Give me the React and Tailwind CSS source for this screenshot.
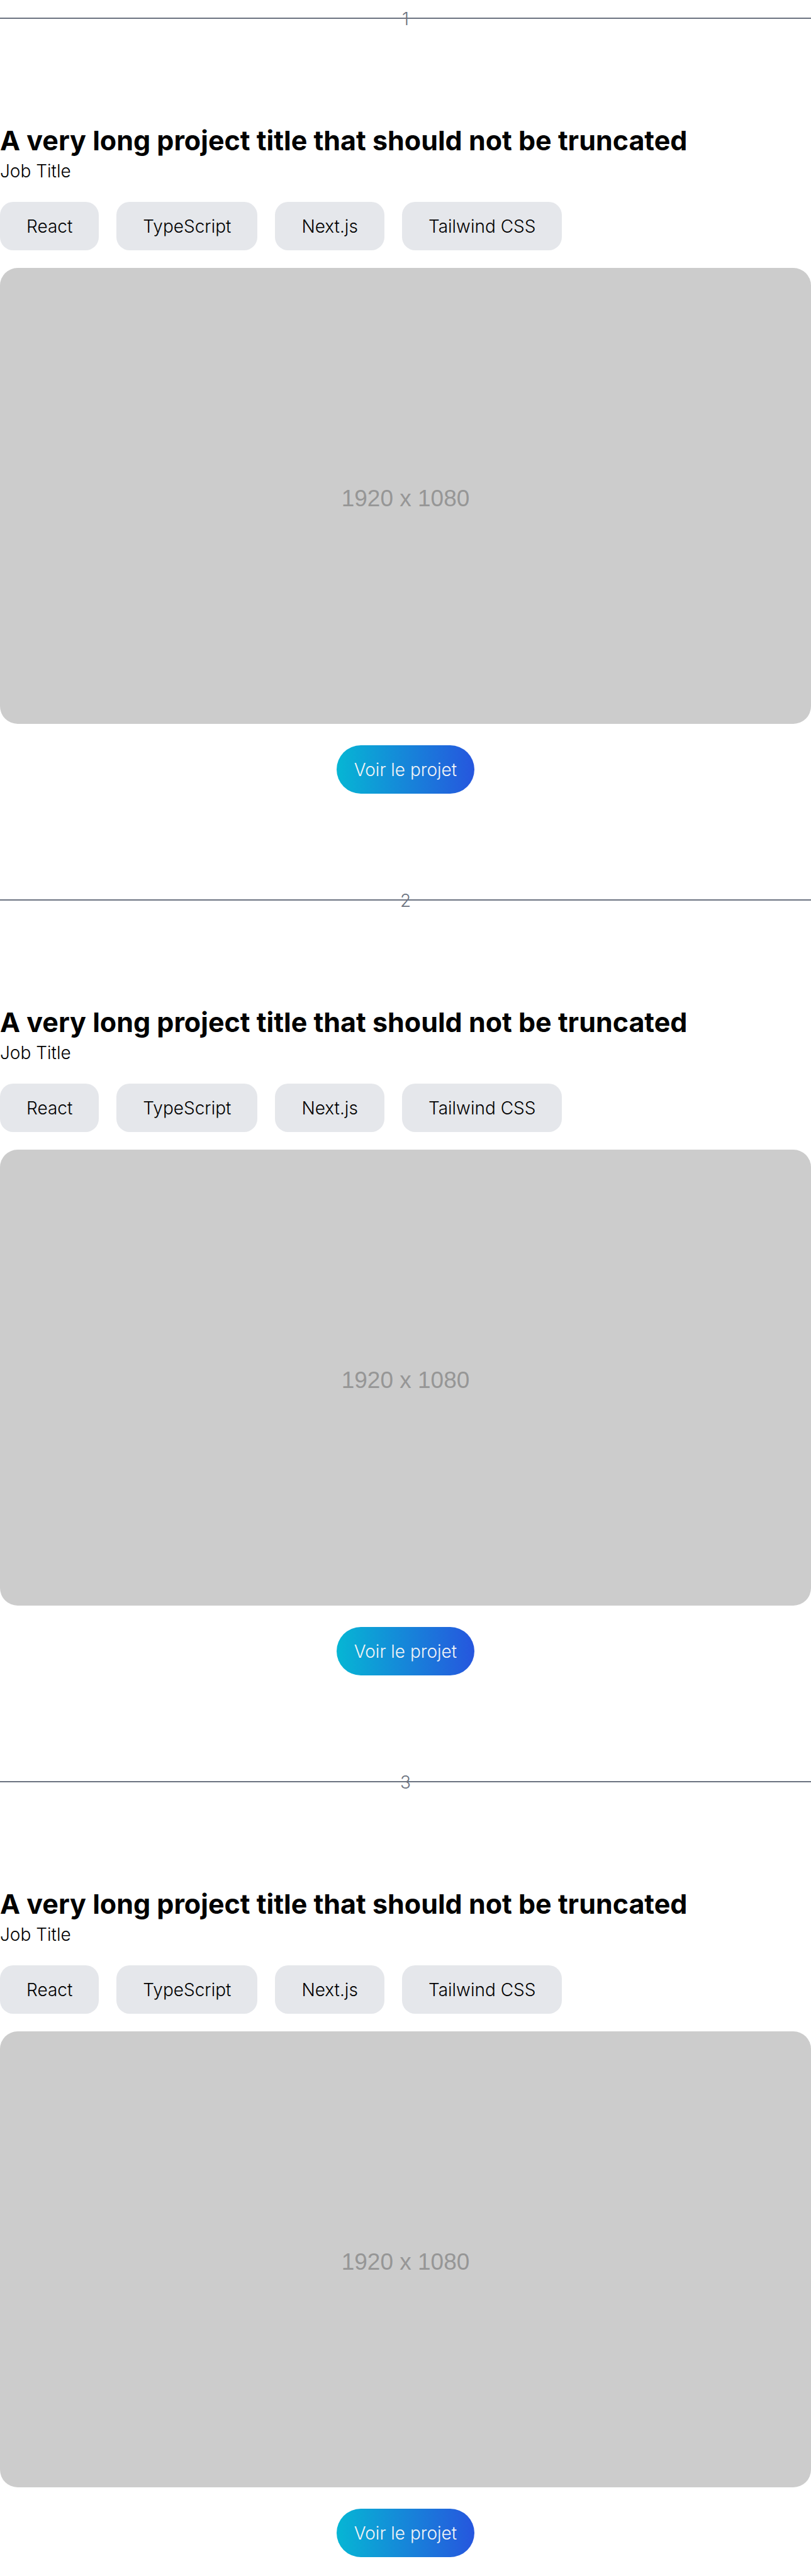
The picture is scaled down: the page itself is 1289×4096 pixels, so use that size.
const projects = [1, 2, 3];
const tags = ["React", "TypeScript", "Next.js", "Tailwind CSS"];

function Separator({ number }) {
  return (
    <div className="grid h-[60px] w-full text-[#6b7280]">
      <hr className="col-start-1 row-start-1 mt-7 h-0.5 w-full self-start border-0 bg-[#6b7280]" />
      <span className="col-start-1 row-start-1 self-center text-center text-[28px] leading-[42px] font-light">
        {number}
      </span>
    </div>
  );
}

function Project({ number }) {
  return (
    <section className="pb-35 last:pb-7">
      <Separator number={number} />
      <article className="pt-[135px]">
        <h2 className="text-[43px] leading-[56px] font-bold">
          A very long project title that should not be truncated
        </h2>
        <p className="text-[28px] leading-[42px] font-light">Job Title</p>
        <ul className="mt-7 flex flex-wrap gap-7">
          {tags.map((tag) => (
            <li
              key={tag}
              className="flex h-[77px] items-center rounded-[21px] bg-[#e5e7eb] px-[42px] text-[28px] leading-[42px] font-light"
            >
              {tag}
            </li>
          ))}
        </ul>
        <div className="mt-7 flex aspect-video w-full items-center justify-center rounded-[28px] bg-[#cccccc] pt-2">
          <span className="font-['Liberation_Sans',Arial,sans-serif] text-[37px] leading-[42px] text-[#969696]">
            1920 x 1080
          </span>
        </div>
        <div className="mt-[34px] flex justify-center">
          <a
            href="#projet"
            className="flex h-[77px] items-center rounded-full bg-[linear-gradient(to_right,#06b6d4,#2656de)] px-7 text-[28px] leading-[42px] font-light text-[#f3f4f6]"
          >
            Voir le projet
          </a>
        </div>
      </article>
    </section>
  );
}

export default function App() {
  return (
    <main className="bg-white font-['Inter',sans-serif] text-black">
      {projects.map((number) => (
        <Project key={number} number={number} />
      ))}
    </main>
  );
}
